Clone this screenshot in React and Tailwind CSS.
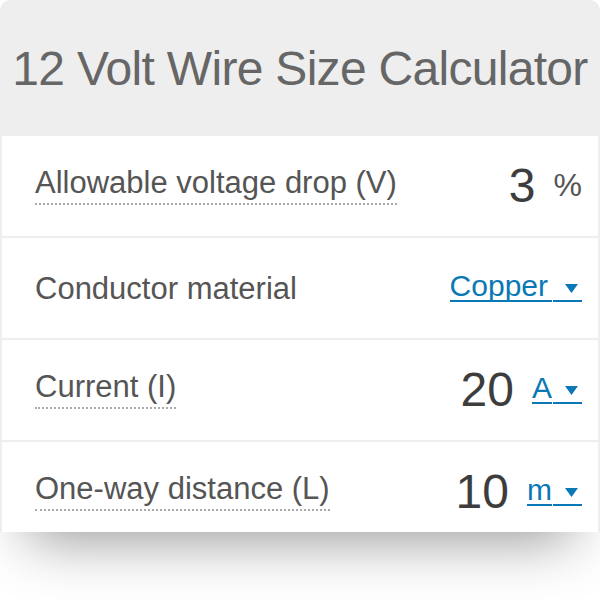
import React from 'react';

const rows = [
  { id: 1, label: 'Allowable voltage drop (V)', value: '3', unit: '%', select: false },
  { id: 2, label: 'Conductor material', value: null, unit: 'Copper', select: true, plain: true },
  { id: 3, label: 'Current (I)', value: '20', unit: 'A', select: true },
  { id: 4, label: 'One-way distance (L)', value: '10', unit: 'm', select: true },
];

const Caret = () => (
  <svg width="13" height="9" viewBox="0 0 13 9" className="block">
    <path d="M0 0 H13 L6.5 9 Z" fill="#0a78b4" />
  </svg>
);

function Unit({ row }) {
  if (!row.select) {
    return <span className="text-[32px] leading-none text-[#555] mb-[3px]">{row.unit}</span>;
  }
  return (
    <a className="flex items-end text-[#0a78b4] cursor-pointer -mt-[1px]">
      <span className={row.plain
        ? 'text-[30px] leading-[26px] pb-[1px] pr-[4px] border-b-2 border-[#0a78b4]'
        : 'text-[30px] leading-[26px] pb-[1px] border-b-2 border-[#0a78b4]'}>{row.unit}</span>
      <span className="ml-[1px] w-[29px] h-[29px] flex items-end justify-end pr-[4px] pb-[7px] border-b-2 border-[#0a78b4]">
        <Caret />
      </span>
    </a>
  );
}

export default function App() {
  return (
    <div className="w-[600px] h-[600px] bg-white" style={{ fontFamily: '"Liberation Sans", Arial, sans-serif' }}>
      <div className="h-[532px] overflow-hidden rounded-t-[10px] bg-[#eeeeee] shadow-[0_35px_55px_-28px_rgba(0,0,0,0.42)]">
        <header className="h-[136px] flex items-center justify-center pt-[2px]">
          <h1 className="text-[48px] leading-none tracking-[-0.7px] text-[#666]">12 Volt Wire Size Calculator</h1>
        </header>
        <div className="flex flex-col gap-[2px] px-[2px]">
          {rows.map(row => (
            <div key={row.id} className="h-[100px] shrink-0 bg-white flex items-center justify-between pl-[33px] pr-[16px]">
              {row.plain ? (
                <span className="text-[31px] leading-none text-[#555]">{row.label}</span>
              ) : (
                <span className="text-[31px] leading-none text-[#555] pb-[5px] border-b-2 border-dotted border-[#aaa]">{row.label}</span>
              )}
              <div className="flex items-center gap-[18px]">
                {row.value && <span className="text-[48px] leading-none text-[#3d3d3d]">{row.value}</span>}
                <Unit row={row} />
              </div>
            </div>
          ))}
        </div>
      </div>
    </div>
  );
}
